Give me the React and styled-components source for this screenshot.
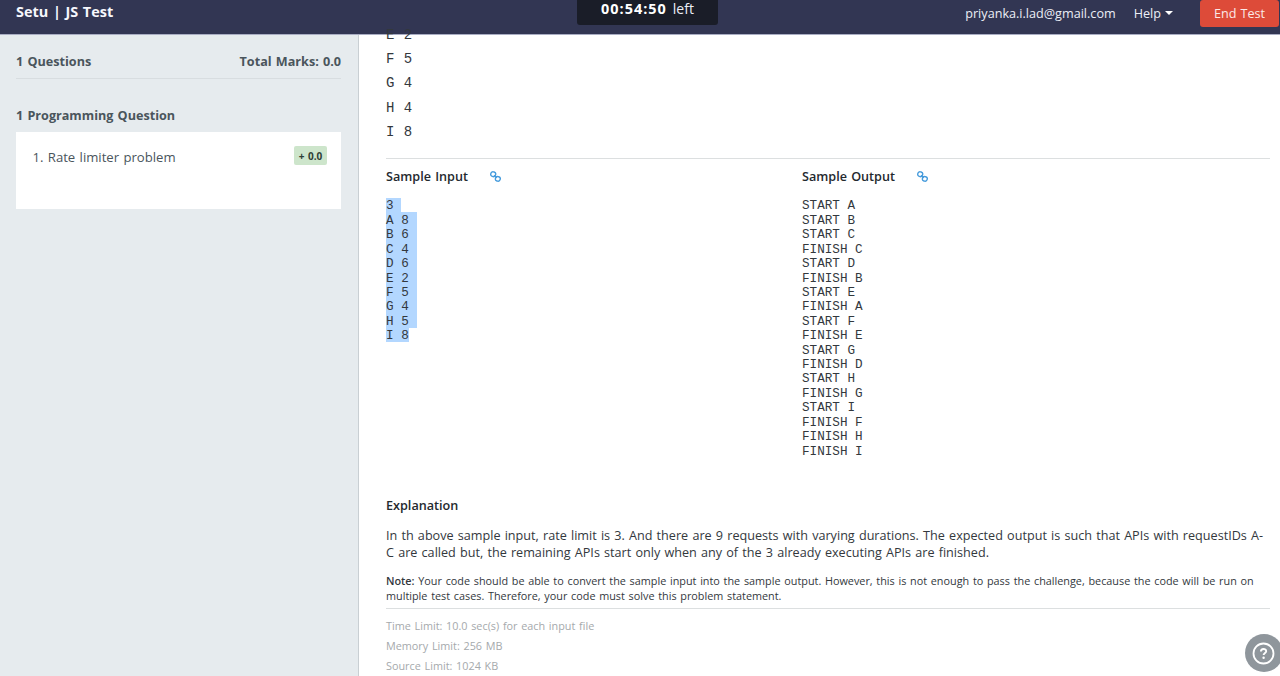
import React from 'react';
import styled, { createGlobalStyle } from 'styled-components';

const GlobalStyle = createGlobalStyle`
  * { box-sizing: border-box; }
  body {
    margin: 0;
    overflow: hidden;
    background: #fff;
    color: #33383d;
    font-family: "Open Sans", "Liberation Sans", sans-serif;
    font-size: 12.64px;
    line-height: 18px;
    word-spacing: 0.9px;
  }
`;

const Page = styled.div`
  display: flex;
  flex-direction: column;
  height: 676px;
  overflow: hidden;
`;

const Header = styled.header`
  display: grid;
  grid-template-columns: 1fr 141px 1fr;
  align-items: start;
  flex: none;
  height: 35px;
  background: #323653;
  border-bottom: 1px solid #a9adc3;
  color: #eceef6;
`;

const Title = styled.h1`
  margin: 0;
  padding: 2px 0 0 16px;
  font-size: 14.45px;
  font-weight: 700;
  line-height: 20px;
  color: #f6f7fc;
`;

const Timer = styled.div`
  display: flex;
  justify-content: center;
  gap: 6px;
  width: 141px;
  height: 25px;
  margin-left: 7.5px;
  border-radius: 0 0 3px 3px;
  background: #1a1d28;
  font-size: 14px;
  line-height: 18px;
`;

const Clock = styled.strong`
  font-size: 14.45px;
  font-weight: 700;
  letter-spacing: 1px;
  color: #fff;
`;

const Account = styled.div`
  display: flex;
  justify-content: flex-end;
  padding-right: 1px;
`;

const HeaderText = styled.span`
  display: flex;
  align-items: center;
  gap: 4px;
  height: 26px;
  margin-right: ${(p) => p.$gap}px;
`;

const Caret = styled.i`
  border: 4px solid transparent;
  border-top-color: #fff;
  border-bottom: 0;
`;

const EndButton = styled.button`
  width: 79px;
  height: 27px;
  padding: 0 0 2px;
  border: 0;
  border-radius: 3px;
  background: #dd4b39;
  color: #fbe9e7;
  font: inherit;
  word-spacing: inherit;
`;

const Body = styled.div`
  display: flex;
  flex: 1;
  min-height: 0;
`;

const Sidebar = styled.aside`
  flex: none;
  width: 359px;
  padding: 17px 17px 0 16px;
  background: #e6ebee;
  border-right: 1px solid #c9cfd3;
  color: #4a555c;
`;

const Summary = styled.div`
  display: flex;
  justify-content: space-between;
  height: 27px;
  border-bottom: 1px solid #d8dde0;
  font-weight: 700;
`;

const GroupTitle = styled.h2`
  margin: 27px 0 8px;
  font-size: inherit;
  font-weight: 700;
`;

const QuestionCard = styled.div`
  display: flex;
  justify-content: space-between;
  align-items: flex-start;
  height: 77px;
  padding: 14px 14px 0 16.5px;
  background: #fff;
  font-size: 13.15px;
  line-height: 22px;
`;

const Marks = styled.span`
  width: 33px;
  height: 19px;
  border-radius: 2px;
  background: #cde5cb;
  color: #2f3f36;
  font-size: 10px;
  font-weight: 700;
  line-height: 20px;
  text-align: center;
`;

const Content = styled.main`
  flex: 1;
  min-width: 0;
  padding: 0 10px 0 27px;
`;

const RequestList = styled.div`
  height: 136.4px;
  margin-top: -12.4px;
  border-bottom: 1px solid #dcdfe0;
  font-family: "Liberation Mono", monospace;
  font-size: 14px;
  line-height: 24.3px;
  word-spacing: 1px;
  white-space: pre;
`;

const Samples = styled.div`
  display: grid;
  grid-template-columns: 416px 1fr;
  height: 337px;
`;

const SampleTitle = styled.h3`
  display: flex;
  align-items: center;
  gap: 22px;
  height: 18px;
  margin: 8px 0 13px;
  font-size: inherit;
  font-weight: 600;
  color: #24292e;
`;

const LinkIcon = styled.svg`
  width: 11px;
  height: 11px;
  fill: none;
  stroke: #459bdc;
`;

const Code = styled.pre`
  margin: 0;
  font-family: "Liberation Mono", monospace;
  font-size: 12.64px;
  line-height: 12.03px;
  word-spacing: 0;
`;

const CodeLine = styled.span`
  display: block;
  width: max-content;
  padding-top: 2.4px;
  padding-right: ${(p) => (p.$newline ? 7.8 : 0)}px;
  background: ${(p) => (p.$selected ? '#b3d7ff' : 'transparent')};
`;

const SectionTitle = styled.h3`
  margin: 0 0 13px;
  font-size: inherit;
  font-weight: 600;
  color: #24292e;
`;

const Paragraph = styled.p`
  margin: 0;
  line-height: 17px;
`;

const Note = styled.p`
  height: 36px;
  margin: 12px 0 0;
  border-bottom: 1px solid #dcdfe0;
  font-size: 10.84px;
  line-height: 15px;

  strong { font-weight: 600; }
`;

const Limits = styled.div`
  padding-top: 7px;
  color: #a5a9ac;
  font-size: 10.84px;
  line-height: 19.8px;
`;

const HelpButton = styled.button`
  position: fixed;
  left: 1245px;
  top: 634px;
  width: 38px;
  height: 38px;
  padding: 0;
  border: 0;
  border-radius: 50%;
  background: #8f969c;

  svg { display: block; }
`;

const REQUESTS = ['E 2', 'F 5', 'G 4', 'H 4', 'I 8'];
const INPUT = ['3', 'A 8', 'B 6', 'C 4', 'D 6', 'E 2', 'F 5', 'G 4', 'H 5', 'I 8'];
const OUTPUT = [
  'START A', 'START B', 'START C', 'FINISH C', 'START D', 'FINISH B',
  'START E', 'FINISH A', 'START F', 'FINISH E', 'START G', 'FINISH D',
  'START H', 'FINISH G', 'START I', 'FINISH F', 'FINISH H', 'FINISH I',
];

function ChainLink() {
  return (
    <LinkIcon viewBox="0 0 11 11" strokeWidth="1.4">
      <rect x="0.8" y="0.8" width="4.9" height="4.7" rx="2.1" transform="rotate(15 3 3)" />
      <rect x="5.4" y="5.6" width="4.8" height="4.6" rx="2.1" transform="rotate(15 8 8)" />
      <path d="M4 4.3 L6.8 6.8" />
    </LinkIcon>
  );
}

export default function App() {
  return (
    <Page>
      <GlobalStyle />
      <Header>
        <Title>Setu | JS Test</Title>
        <Timer><Clock>00:54:50</Clock><span>left</span></Timer>
        <Account>
          <HeaderText $gap={18}>priyanka.i.lad@gmail.com</HeaderText>
          <HeaderText $gap={27}>Help<Caret /></HeaderText>
          <EndButton>End Test</EndButton>
        </Account>
      </Header>
      <Body>
        <Sidebar>
          <Summary><span>1 Questions</span><span>Total Marks: 0.0</span></Summary>
          <GroupTitle>1 Programming Question</GroupTitle>
          <QuestionCard>
            <span>1. Rate limiter problem</span>
            <Marks>+ 0.0</Marks>
          </QuestionCard>
        </Sidebar>
        <Content>
          <RequestList>
            {REQUESTS.map((line) => <div key={line}>{line}</div>)}
          </RequestList>
          <Samples>
            <section>
              <SampleTitle>Sample Input<ChainLink /></SampleTitle>
              <Code>
                {INPUT.map((line, i) => (
                  <CodeLine key={line} $selected $newline={i < INPUT.length - 1}>{line}</CodeLine>
                ))}
              </Code>
            </section>
            <section>
              <SampleTitle>Sample Output<ChainLink /></SampleTitle>
              <Code>
                {OUTPUT.map((line) => <CodeLine key={line}>{line}</CodeLine>)}
              </Code>
            </section>
          </Samples>
          <SectionTitle>Explanation</SectionTitle>
          <Paragraph>
            In th above sample input, rate limit is 3. And there are 9 requests with varying durations. The expected output is such that APIs with requestIDs A-<br />
            C are called but, the remaining APIs start only when any of the 3 already executing APIs are finished.
          </Paragraph>
          <Note>
            <strong>Note:</strong> Your code should be able to convert the sample input into the sample output. However, this is not enough to pass the challenge, because the code will be run on<br />
            multiple test cases. Therefore, your code must solve this problem statement.
          </Note>
          <Limits>
            <div>Time Limit: 10.0 sec(s) for each input file</div>
            <div>Memory Limit: 256 MB</div>
            <div>Source Limit: 1024 KB</div>
          </Limits>
        </Content>
      </Body>
      <HelpButton aria-label="Help">
        <svg width="38" height="38" viewBox="0 0 38 38" fill="none" stroke="#fff">
          <circle cx="18.5" cy="19.5" r="10" strokeWidth="1.8" />
          <path d="M15.9 17.4 C15.9 14.2 21.2 14.2 21.2 17.2 C21.2 19 18.6 19 18.6 21.1" strokeWidth="1.9" />
          <circle cx="18.6" cy="23.7" r="1.2" fill="#fff" stroke="none" />
        </svg>
      </HelpButton>
    </Page>
  );
}
